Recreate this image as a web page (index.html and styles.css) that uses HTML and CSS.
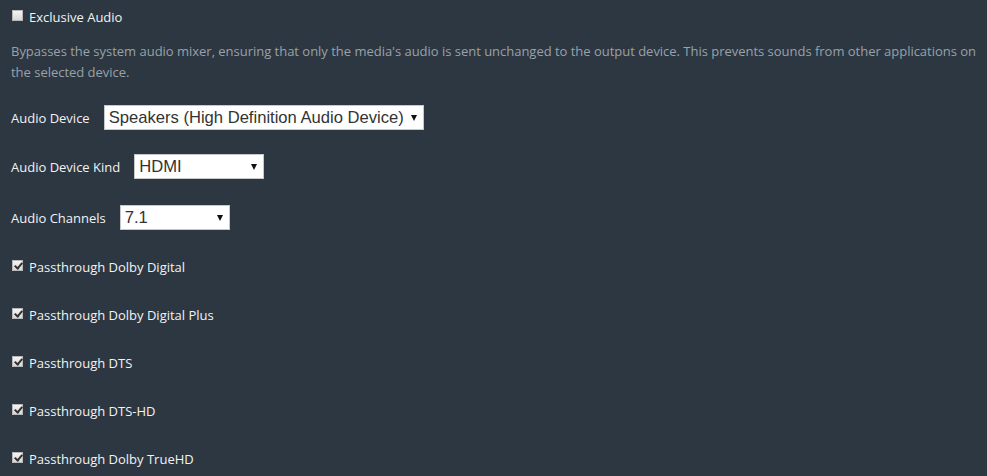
FILE: index.html
```html
<!DOCTYPE html>
<html>
<head>
<meta charset="utf-8">
<link rel="stylesheet" href="styles.css">
</head>
<body>
<div class="page">
  <label class="check-row first">
    <input type="checkbox" class="cb">
    <span>Exclusive Audio</span>
  </label>
  <div class="desc">Bypasses the system audio mixer, ensuring that only the media's audio is sent unchanged to the output device. This prevents sounds from other applications on the selected device.</div>

  <div class="field f-device">
    <span class="field-label">Audio Device</span>
    <div class="select-wrap w-device"><select class="sel"><option>Speakers (High Definition Audio Device)</option></select></div>
  </div>
  <div class="field f-kind">
    <span class="field-label">Audio Device Kind</span>
    <div class="select-wrap w-kind"><select class="sel"><option>HDMI</option></select></div>
  </div>
  <div class="field f-channels">
    <span class="field-label">Audio Channels</span>
    <div class="select-wrap w-channels"><select class="sel"><option>7.1</option></select></div>
  </div>

  <div class="pass-list">
    <label class="check-row"><input type="checkbox" class="cb" checked><span>Passthrough Dolby Digital</span></label>
    <label class="check-row"><input type="checkbox" class="cb" checked><span>Passthrough Dolby Digital Plus</span></label>
    <label class="check-row"><input type="checkbox" class="cb" checked><span>Passthrough DTS</span></label>
    <label class="check-row"><input type="checkbox" class="cb" checked><span>Passthrough DTS-HD</span></label>
    <label class="check-row"><input type="checkbox" class="cb" checked><span>Passthrough Dolby TrueHD</span></label>
  </div>
</div>
</body>
</html>
```
FILE: styles.css
```css
html, body {
  margin: 0;
  padding: 0;
  background: #2c3742;
  height: 100%;
  overflow: hidden;
}
body {
  font-family: "Open Sans", "Noto Sans", sans-serif;
  font-size: 13px;
  color: #f2f2f2;
}
.page {
  padding: 6px 2px 0 11px;
  display: flex;
  flex-direction: column;
}
.check-row {
  display: flex;
  align-items: center;
  height: 21px;
  padding-left: 1px;
}
.cb {
  -webkit-appearance: none;
  appearance: none;
  margin: 0 6px 0 0;
  width: 11px;
  height: 11px;
  box-sizing: border-box;
  border: 1px solid #b8b8b8;
  background: linear-gradient(#f4f4f4, #d8d8d8);
  position: relative;
  flex: none;
  top: -1px;
}
.cb:checked::after {
  content: "";
  position: absolute;
  left: 3px;
  top: 0px;
  width: 3px;
  height: 6px;
  border: solid #333;
  border-width: 0 2px 2px 0;
  transform: rotate(40deg);
}
.desc {
  margin-top: 14px;
  line-height: 21px;
  color: #9aa1a8;
  letter-spacing: -0.02px;
}
.field {
  display: flex;
  align-items: center;
}
.f-device { margin-top: 22px; }
.f-kind { margin-top: 24px; }
.f-channels { margin-top: 26px; }
.field-label {
  margin-right: 14px;
}
.select-wrap {
  position: relative;
  height: 25px;
}
.select-wrap::after {
  content: "";
  position: absolute;
  right: 7px;
  top: 10px;
  border-left: 3px solid transparent;
  border-right: 3px solid transparent;
  border-top: 6px solid #111;
  pointer-events: none;
}
.sel {
  -webkit-appearance: none;
  appearance: none;
  width: 100%;
  height: 25px;
  box-sizing: border-box;
  border: 1px solid #c8c8c8;
  border-radius: 0;
  background: #fff;
  color: #333;
  font-family: "Liberation Sans", Arial, sans-serif;
  font-size: 16.6px;
  padding: 0 18px 0 4px;
  margin: 0;
}
.w-device { width: 320px; }
.w-kind { width: 130px; }
.w-channels { width: 110px; }
.pass-list {
  margin-top: 26px;
  display: flex;
  flex-direction: column;
  gap: 27px;
}
```
